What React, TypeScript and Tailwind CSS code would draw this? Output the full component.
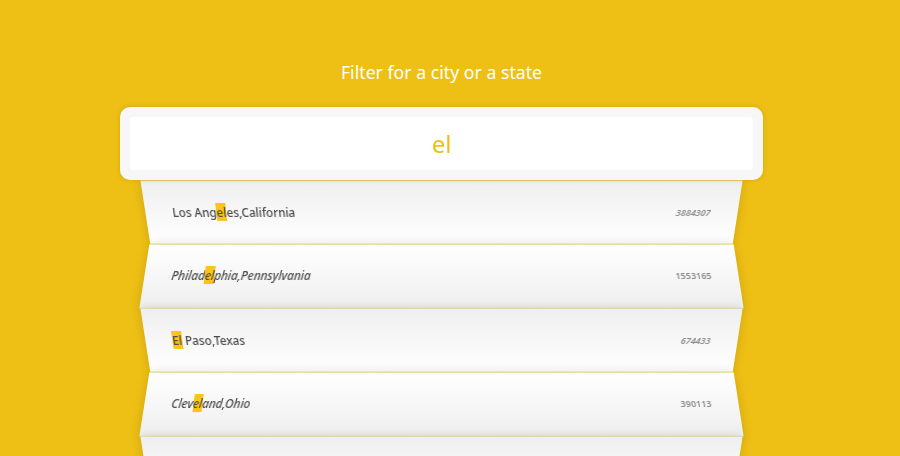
import React from "react";

type Part = [string, boolean];
type Row = { parts: Part[]; pop: string };

const rows: Row[] = [
  { parts: [["Los Ang", false], ["el", true], ["es,California", false]], pop: "3884307" },
  { parts: [["Philad", false], ["el", true], ["phia,Pennsylvania", false]], pop: "1553165" },
  { parts: [["El", true], [" Paso,Texas", false]], pop: "674433" },
  { parts: [["Clev", false], ["el", true], ["and,Ohio", false]], pop: "390113" },
  { parts: [["Bakersfi", false], ["el", true], ["d,California", false]], pop: "363630" },
  { parts: [["Wilmington,D", false], ["el", true], ["aware", false]], pop: "71525" },
];

function Item({ row, index }: { row: Row; index: number }) {
  const odd = index % 2 === 0;
  return (
    <li
      className={
        odd
          ? "relative flex h-[64px] items-center justify-between border-b border-[#e6e4dc] bg-linear-to-t from-white to-[#efefef] px-[27px] shadow-[0_0_10px_rgba(0,0,0,0.14)] [transform:perspective(100px)_rotateX(-3deg)_translateY(3px)]"
          : "relative flex h-[64px] items-center justify-between border-b border-[#e6e4dc] bg-linear-to-b from-white to-[#efefef] px-[27px] shadow-[0_0_10px_rgba(0,0,0,0.14)] [transform:perspective(100px)_rotateX(3deg)_translateY(2px)_scale(1.001)]"
      }
    >
      <span
        className={
          odd
            ? "text-[11.7px] font-medium text-[#4a4a4a]"
            : "text-[11.7px] font-medium italic text-[#4a4a4a]"
        }
      >
        {row.parts.map(([t, hl], i) =>
          hl ? (
            <span key={i} className="bg-[#fcc416] py-[1px]">
              {t}
            </span>
          ) : (
            <span key={i}>{t}</span>
          )
        )}
      </span>
      <span
        className={
          odd
            ? "text-[9px] font-semibold italic text-[#8a8a8a]"
            : "text-[9px] font-semibold text-[#8a8a8a]"
        }
      >
        {row.pop}
      </span>
    </li>
  );
}

export default function App() {
  return (
    <div
      className="h-[456px] w-[900px] overflow-hidden bg-[#eebf14]"
      style={{ fontFamily: '"Noto Sans", "Open Sans", sans-serif' }}
    >
      <div className="flex w-[883px] flex-col items-center pt-[60px]">
        <h1 className="text-[17.7px] leading-[25px] font-normal text-white">Filter for a city or a state</h1>
        <div className="relative z-10 mt-[22px] h-[73px] w-[643px] rounded-[10px] bg-[#f7f7f7] p-[9px] shadow-[0_0_5px_rgba(0,0,0,0.12)]">
          <input
            readOnly
            value="el"
            className="h-full w-full rounded-[3px] bg-white text-center text-[24px] font-normal text-[#eebf14] shadow-[inset_0_0_2px_rgba(0,0,0,0.12)] outline-none"
          />
        </div>
        <ul className="relative -mt-[2px] w-[593px]">
          {rows.map((r, i) => (
            <Item key={i} row={r} index={i} />
          ))}
        </ul>
      </div>
    </div>
  );
}
